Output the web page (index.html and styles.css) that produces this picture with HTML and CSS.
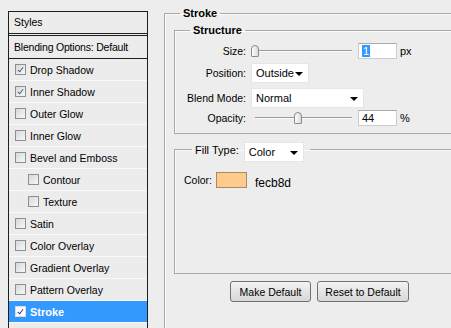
FILE: index.html
```html
<!DOCTYPE html>
<html lang="en">
<head>
  <meta charset="UTF-8">
  <title>Layer Style - Stroke</title>
  <link rel="stylesheet" href="styles.css">
</head>
<body>
  <div class="dialog">
    <div class="styles-panel">
      <div class="panel-head">Styles</div>
      <div class="panel-row blend">Blending Options: Default</div>
      <div class="panel-row"><span class="check on"></span>Drop Shadow</div>
      <div class="panel-row"><span class="check on"></span>Inner Shadow</div>
      <div class="panel-row"><span class="check"></span>Outer Glow</div>
      <div class="panel-row"><span class="check"></span>Inner Glow</div>
      <div class="panel-row"><span class="check"></span>Bevel and Emboss</div>
      <div class="panel-row sub"><span class="check"></span>Contour</div>
      <div class="panel-row sub"><span class="check"></span>Texture</div>
      <div class="panel-row"><span class="check"></span>Satin</div>
      <div class="panel-row"><span class="check"></span>Color Overlay</div>
      <div class="panel-row"><span class="check"></span>Gradient Overlay</div>
      <div class="panel-row"><span class="check"></span>Pattern Overlay</div>
      <div class="panel-row selected"><span class="check on"></span>Stroke</div>
    </div>

    <fieldset class="group outer">
      <legend>Stroke</legend>

      <fieldset class="group structure">
        <legend>Structure</legend>
        <div class="form">
          <div class="label">Size:</div>
          <div class="ctrl">
            <div class="slider"><span class="thumb" style="left: 0%"></span></div>
            <div class="field"><span class="sel-text">1</span></div>
            <span class="unit">px</span>
          </div>

          <div class="label">Position:</div>
          <div class="ctrl">
            <div class="select pos">Outside<span class="arrow"></span></div>
          </div>

          <div class="label">Blend Mode:</div>
          <div class="ctrl">
            <div class="select mode">Normal<span class="arrow"></span></div>
          </div>

          <div class="label">Opacity:</div>
          <div class="ctrl">
            <div class="slider"><span class="thumb" style="left: 44%"></span></div>
            <div class="field">44</div>
            <span class="unit">%</span>
          </div>
        </div>
      </fieldset>

      <fieldset class="group fill">
        <legend><span class="legend-text">Fill Type:</span><span class="select fill-sel">Color<span class="arrow"></span></span></legend>
        <div class="color-row">
          <span class="color-label">Color:</span>
          <span class="swatch"></span>
          <span class="hex">fecb8d</span>
        </div>
      </fieldset>

      <div class="buttons">
        <button class="btn">Make Default</button>
        <button class="btn">Reset to Default</button>
      </div>
    </fieldset>
  </div>
</body>
</html>
```

FILE: styles.css
```css
html, body {
  margin: 0;
  padding: 0;
  height: 100%;
  overflow: hidden;
  background-color: #ededed;
  color: #000;
  font-family: "Liberation Sans", Arial, sans-serif;
  font-size: 10.5px;
}

.dialog {
  display: flex;
  align-items: flex-start;
  height: 100%;
  padding-left: 8px;
  overflow: hidden;
}

/* styles list on the left */

.styles-panel {
  flex: none;
  width: 138px;
  height: 100%;
  margin-top: 11px;
  border: 1px solid #1e1e1e;
  border-bottom: none;
  background-color: #ececec;
  white-space: nowrap;
}

.panel-head {
  height: 21px;
  line-height: 21px;
  padding-left: 5px;
  border-bottom: 3px double #1e1e1e;
}

.panel-row {
  display: flex;
  align-items: center;
  height: 21px;
  padding-left: 6px;
  border-bottom: 1px solid #fafafa;
}

.panel-row.blend {
  height: 22px;
  padding-left: 5px;
  letter-spacing: -0.2px;
  border-bottom: 1px solid #1e1e1e;
}

.panel-row.sub {
  padding-left: 19px;
}

.panel-row.selected {
  background-color: #3399ff;
  color: #fff;
  font-weight: bold;
  font-size: 11px;
}

.check {
  position: relative;
  width: 9px;
  height: 9px;
  margin-right: 4px;
  border: 1px solid #8e8f8f;
  background: linear-gradient(135deg, #d8d8d8, #f7f7f7);
  flex: none;
}

.check.on::after {
  content: "";
  position: absolute;
  left: 3px;
  top: 1px;
  width: 2px;
  height: 5px;
  border: solid #4b5a8e;
  border-width: 0 1.5px 1.5px 0;
  transform: rotate(38deg);
}

.selected .check {
  background: #fff;
  border-color: #dcdcdc;
}

.selected .check.on::after {
  border-color: #3a2f8c;
}

/* right side groups */

fieldset.group {
  margin: 0;
  min-width: 0;
  border: 1px solid #a9a9a9;
  box-shadow: inset 1px 1px 0 #fbfbfb;
}

fieldset.group > legend {
  line-height: 14px;
  height: 14px;
  padding: 0 3px;
  font-weight: bold;
  font-size: 11px;
}

.outer {
  flex: none;
  width: 300px;
  margin-top: 6px !important;
  margin-left: 16px !important;
  padding: 3px 0 0 9px;
  height: 400px;
}

.outer > legend {
  margin-left: 6px;
}

.structure {
  padding: 5px 0 7px 0;
}

.structure > legend {
  margin-left: 15px;
}

.form {
  display: grid;
  grid-template-columns: 71px 1fr;
  grid-template-rows: 18px 26px 24px 16px;
  column-gap: 5px;
  align-items: center;
}

.label {
  text-align: right;
}

.ctrl {
  display: flex;
  align-items: center;
}

.slider {
  position: relative;
  width: 97px;
  height: 14px;
  margin: 0 4px;
}

.slider::before {
  content: "";
  position: absolute;
  left: 0;
  right: 0;
  top: 6px;
  height: 1px;
  background-color: #9a9a9a;
  border-bottom: 1px solid #fcfcfc;
}

.thumb {
  position: absolute;
  top: 1px;
  width: 6px;
  height: 10px;
  margin-left: -4px;
  border: 1px solid #8a8a8a;
  border-radius: 4px 4px 1px 1px;
  background: linear-gradient(90deg, #fdfdfd, #dadada);
}

.field {
  width: 34px;
  height: 14px;
  line-height: 14px;
  margin-left: 2px;
  padding-left: 3px;
  background-color: #fff;
  border: 1px solid #c9cdd3;
  border-top-color: #a6abb3;
  font-size: 11px;
}

.sel-text {
  background-color: #3399ff;
  color: #fff;
  padding: 0 1px;
}

.unit {
  margin-left: 3px;
  font-size: 11px;
}

.select {
  position: relative;
  display: inline-flex;
  align-items: center;
  height: 20px;
  padding-left: 4px;
  background-color: #fff;
  border: 1px solid #e6e6e6;
  box-sizing: border-box;
  font-weight: normal;
  font-size: 11px;
}

.select .arrow {
  position: absolute;
  right: 5px;
  top: 8px;
  border-left: 4px solid transparent;
  border-right: 4px solid transparent;
  border-top: 4px solid #000;
}

.select.pos {
  width: 58px;
}

.select.mode {
  width: 113px;
}

/* fill type group */

.fill {
  margin-top: 8px !important;
  padding: 16px 0 85px 9px;
}

.fill > legend {
  display: flex;
  align-items: flex-start;
  margin-left: 8px;
  padding: 0 6px 0 3px !important;
  font-weight: normal !important;
}

.legend-text {
  line-height: 16px;
  margin-right: 5px;
}

.select.fill-sel {
  width: 60px;
}

.color-row {
  display: flex;
  align-items: center;
  height: 16px;
}

.color-label {
  width: 32px;
}

.swatch {
  width: 29px;
  height: 14px;
  border: 1px solid #a98a66;
  background-color: #fecb8d;
}

.hex {
  margin-left: 8px;
  margin-top: 5px;
  font-size: 12px;
}

.buttons {
  display: flex;
  gap: 6px;
  margin: 7px 0 0 56px;
}

.btn {
  height: 21px;
  padding: 0;
  border: 1px solid #707070;
  border-radius: 3px;
  background: linear-gradient(#f4f4f4, #e4e4e4 50%, #d8d8d8);
  font-family: "Liberation Sans", Arial, sans-serif;
  font-size: 10.5px;
  color: #000;
}

.btn:first-child {
  width: 81px;
}

.btn:last-child {
  width: 92px;
}
```
